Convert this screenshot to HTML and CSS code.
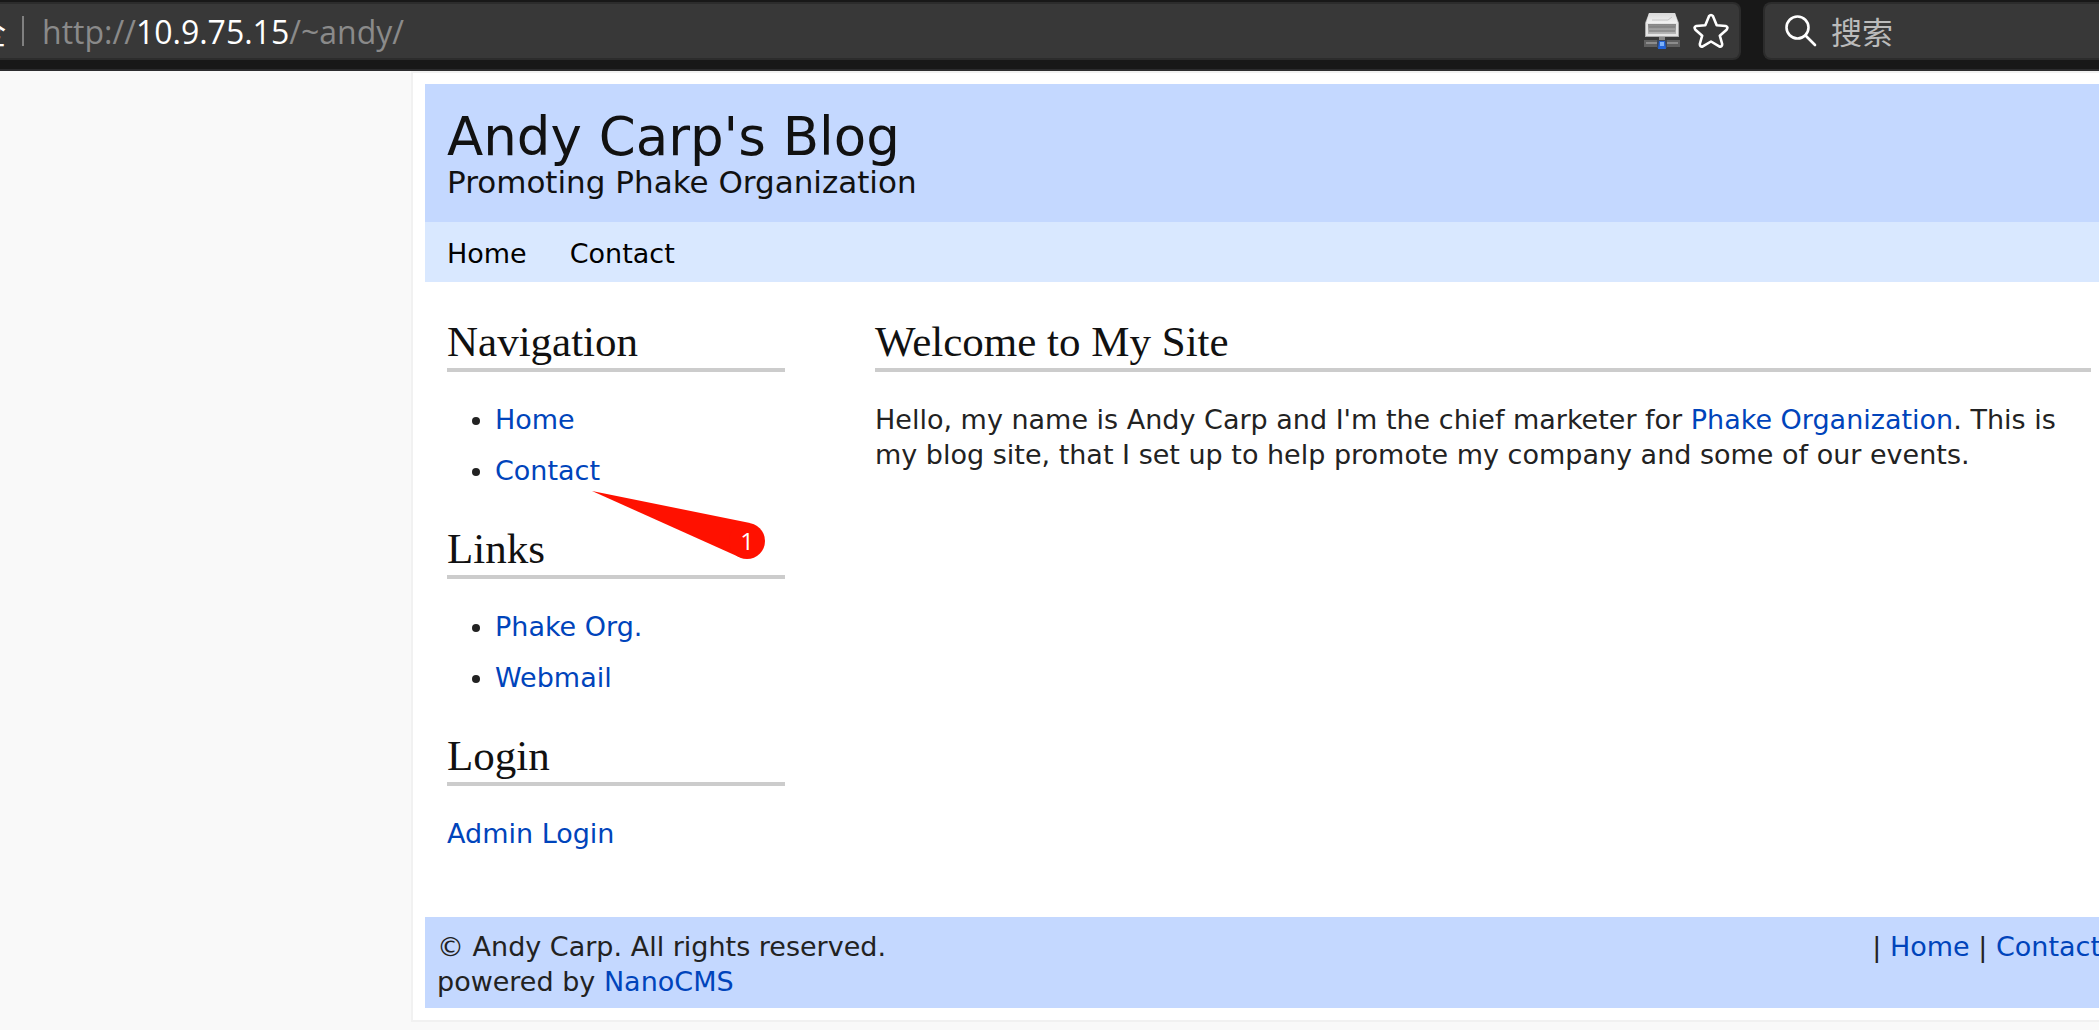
FILE: index.html
```html
<!DOCTYPE html>
<html lang="en">
<head>
<meta charset="utf-8">
<title>Andy Carp's Blog</title>
<link rel="stylesheet" href="styles.css">
</head>
<body>
<div class="toolbar">
  <div class="address">
    <span class="security">全</span>
    <span class="divider"></span>
    <div class="url">http://<span class="host">10.9.75.15</span>/~andy/</div>
    <button class="tool" type="button" aria-label="Network drive">
      <svg width="36" height="36" viewBox="0 0 36 36">
        <defs>
          <linearGradient id="lid" x1="0" y1="0" x2="0" y2="1"><stop offset="0" stop-color="#d8d8d8"/><stop offset="1" stop-color="#f2f2f2"/></linearGradient>
          <linearGradient id="face" x1="0" y1="0" x2="0" y2="1"><stop offset="0" stop-color="#858585"/><stop offset="1" stop-color="#b8b8b8"/></linearGradient>
        </defs>
        <path d="M5 0H31L35 10V24H1V10Z" fill="#aaa"/>
        <path d="M5 0H31L34 10H2Z" fill="url(#lid)"/>
        <path d="M8 7H24L28 4" fill="none" stroke="#c4c4c4"/>
        <path d="M2 10H34V23H2Z" fill="#e4e4e4"/>
        <path d="M4 11H32V21H4Z" fill="url(#face)"/>
        <path d="M5 14H31M5 18H31" stroke="#777"/>
        <path d="M15 24H21V28H15Z" fill="#888"/>
        <path d="M0 27H36V34H0Z" fill="#606060"/>
        <path d="M2 30H34" stroke="#8c8c8c" stroke-width="2"/>
        <path d="M13 27H23V35H13Z" fill="#3c4658"/>
        <path d="M15 28H21L22 36H14Z" fill="#2464d8"/>
        <path d="M16 29H20V33H16Z" fill="#7db2fa"/>
      </svg>
    </button>
    <button class="tool" type="button" aria-label="Bookmark this page">
      <svg width="36" height="36" viewBox="0 0 36 36" fill="none" stroke="#fff" stroke-width="2.6" stroke-linejoin="round">
        <path d="M16 3.2Q18 .8 20 3.2L23.7 12.2L32.7 13Q35.6 14 33.6 16.7L26.8 22.7L29.2 31Q29.2 34.3 26.2 33.4L18 28.5L9.800 33.4Q6.800 34.3 6.800 31L9.200 22.700L2.400 16.700Q.4 14 3.300 13L12.300 12.200Z"/>
      </svg>
    </button>
  </div>
  <label class="search">
    <svg width="32" height="32" viewBox="0 0 32 32" fill="none" stroke="#fff" stroke-width="2.6" stroke-linecap="round">
      <circle cx="12.5" cy="12.5" r="11"/><path d="M20.5 20.5L30 30"/>
    </svg>
    <input class="search-input" type="text" placeholder="搜索" aria-label="搜索">
  </label>
</div>

<div class="site">
  <header class="banner">
    <h1 class="title">Andy Carp's Blog</h1>
    <p class="tagline">Promoting Phake Organization</p>
  </header>
  <nav class="menu">
    <a href="#home">Home</a>
    <a href="#contact">Contact</a>
  </nav>
  <div class="columns">
    <aside class="sidebar">
      <section class="block">
        <h2 class="heading">Navigation</h2>
        <ul class="list">
          <li><a href="#home">Home</a></li>
          <li><a href="#contact">Contact</a></li>
        </ul>
        <svg class="callout" width="175" height="70" viewBox="0 0 175 70">
          <path d="M0 0L158 32L147 66Z" fill="#ff1100"/>
          <circle cx="155" cy="50" r="18" fill="#ff1100"/>
          <text class="callout-number" x="155" y="59" text-anchor="middle">1</text>
        </svg>
      </section>
      <section class="block">
        <h2 class="heading">Links</h2>
        <ul class="list">
          <li><a href="#phake">Phake Org.</a></li>
          <li><a href="#webmail">Webmail</a></li>
        </ul>
      </section>
      <section class="block">
        <h2 class="heading">Login</h2>
        <p class="text"><a href="#login">Admin Login</a></p>
      </section>
    </aside>
    <main class="main">
      <h2 class="heading">Welcome to My Site</h2>
      <p class="text">Hello, my name is Andy Carp and I'm the chief marketer for <a href="#phake">Phake Organization</a>. This is my blog site, that I set up to help promote my company and some of our events.</p>
    </main>
  </div>
  <footer class="footer">
    <p>© Andy Carp. All rights reserved.<br>powered by <a href="#nanocms">NanoCMS</a></p>
    <p>| <a href="#home">Home</a> | <a href="#contact">Contact</a></p>
  </footer>
</div>
</body>
</html>
```
FILE: styles.css
```css
* {
  box-sizing: border-box;
}

body {
  margin: 0;
  overflow-x: hidden;
  background: #f9f9f9;
  color: #222;
  font: 27px/35px "DejaVu Sans", Verdana, sans-serif;
}

h1, h2, p, ul {
  margin: 0;
  padding: 0;
  font-weight: normal;
}

a {
  color: #0044bb;
  text-decoration: none;
}

/* Browser toolbar */
.toolbar {
  display: flex;
  gap: 22px;
  height: 71px;
  padding: 2px 0 9px;
  background: #181818;
  border-bottom: 2px solid #2c2c2e;
}

.address,
.search {
  display: flex;
  align-items: center;
  background: #383838;
  border: 2px solid #2c2c2c;
  font-family: "Open Sans", "Noto Sans CJK SC", sans-serif;
}

.address {
  flex: 1;
  padding-right: 10px;
  border-left: 0;
  border-radius: 0 8px 8px 0;
}

.security {
  display: flex;
  justify-content: flex-end;
  width: 6px;
  overflow: hidden;
  color: #fff;
  font-size: 32px;
}

.divider {
  width: 2px;
  height: 30px;
  margin: 0 18px 0 16px;
  background: #808080;
}

.url {
  flex: 1;
  color: #8a8a8a;
  font-size: 32px;
}

.host {
  color: #fff;
}

.tool {
  display: flex;
  margin: 0 0 0 13px;
  padding: 0;
  background: none;
  border: 0;
}

.search {
  width: 336px;
  gap: 14px;
  padding-left: 20px;
  border-right: 0;
  border-radius: 8px 0 0 8px;
}

.search-input {
  flex: 1;
  min-width: 0;
  padding: 0 0 2px;
  background: none;
  border: 0;
  color: #fff;
  font: 31px "Noto Sans CJK SC", sans-serif;
}

.search-input::placeholder {
  color: #bbb;
}

/* Blog page */
.site {
  margin: 0 -28px 0 411px;
  padding: 11px 12px 12px;
  background: #fff;
  border: 2px solid #f1f1f1;
}

.banner {
  padding: 26px 22px 22px;
  background: #c4d8ff;
  color: #111;
}

.title {
  font-size: 53px;
  line-height: 54px;
}

.tagline {
  font-size: 31px;
  line-height: 36px;
}

.menu {
  display: flex;
  gap: 43px;
  padding: 14px 22px 11px;
  background: #d9e8ff;
}

.menu a {
  color: #000;
}

.columns {
  display: flex;
  gap: 90px;
  padding: 36px 22px 66px;
}

.sidebar {
  display: flex;
  flex: none;
  flex-direction: column;
  gap: 37px;
  width: 338px;
}

.main {
  flex: 1;
}

.block {
  position: relative;
}

.heading {
  margin-bottom: 30px;
  padding-bottom: 2px;
  border-bottom: 4px solid #ccc;
  color: #111;
  font: 43px/48px Georgia, "Liberation Serif", serif;
}

.list {
  display: flex;
  flex-direction: column;
  gap: 16px;
  padding-left: 48px;
}

.callout {
  position: absolute;
  top: 173px;
  left: 145px;
}

.callout-number {
  fill: #fff;
  font: 24px "Open Sans", sans-serif;
}

.footer {
  display: flex;
  justify-content: space-between;
  padding: 12px 12px 9px;
  background: #c4d8ff;
}
```
